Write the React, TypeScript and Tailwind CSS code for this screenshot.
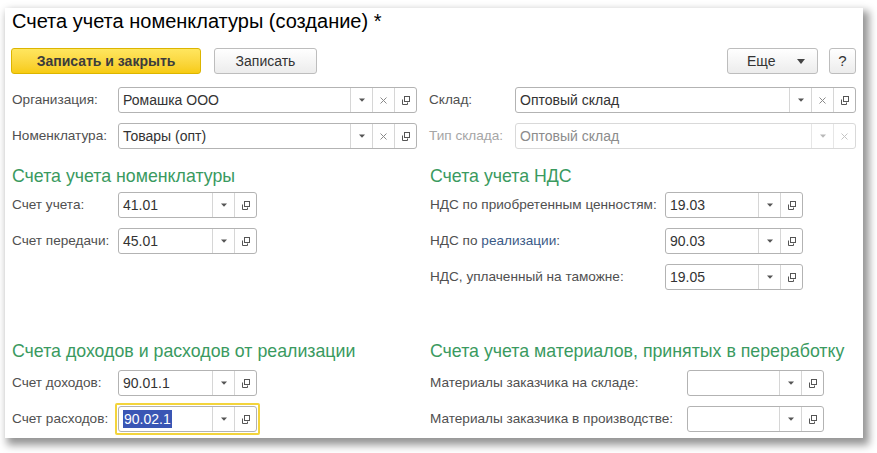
import React from "react";

type Btn = "dd" | "clear" | "open";

function DdIcon({ dim }: { dim?: boolean }) {
  return (
    <svg width="6" height="4" viewBox="0 0 6 4">
      <path d="M0 0.5 H6 L3 3.8 Z" fill={dim ? "#b8b8b8" : "#555"} />
    </svg>
  );
}
function ClearIcon({ dim }: { dim?: boolean }) {
  return (
    <svg width="7" height="7" viewBox="0 0 7 7">
      <path d="M0.5 0.5 L6.5 6.5 M6.5 0.5 L0.5 6.5" stroke={dim ? "#c4c4c4" : "#8a8a8a"} strokeWidth="1" />
    </svg>
  );
}
function OpenIcon() {
  return (
    <svg width="11" height="11" viewBox="0 0 11 11">
      <rect x="4.5" y="1.5" width="5" height="5" fill="none" stroke="#555" strokeWidth="1" />
      <path d="M2.5 4.5 V9.5 H7.5 V7.5" fill="none" stroke="#555" strokeWidth="1" />
    </svg>
  );
}

function Field({
  w,
  value,
  buttons,
  disabled,
  focused,
}: {
  w: string;
  value?: string;
  buttons: Btn[];
  disabled?: boolean;
  focused?: boolean;
}) {
  const border = disabled ? "border-[#d9d9d9]" : "border-[#b3b3b3]";
  const field = (
    <div className={`${w} h-[26px] flex rounded-[3px] border ${border} bg-white`}>
      <div className={`flex-1 flex items-center pl-[4px] text-[14px] ${disabled ? "text-[#8c8c8c]" : "text-[#333]"} overflow-hidden whitespace-nowrap`}>
        {focused ? (
          <span className="bg-[#3a56b4] text-white leading-[18px] px-[1px]">{value}</span>
        ) : (
          value
        )}
      </div>
      {buttons.map((b, i) => (
        <div
          key={i}
          className={`w-[22px] h-full flex items-center justify-center border-l ${disabled ? "border-[#e6e6e6]" : "border-[#d6d6d6]"}`}
        >
          {b === "dd" && <DdIcon dim={disabled} />}
          {b === "clear" && <ClearIcon dim={disabled} />}
          {b === "open" && <OpenIcon />}
        </div>
      ))}
    </div>
  );
  if (focused) {
    return <div className="-m-[3px] border-2 border-[#f3d43c] p-[1px] rounded-[2px]">{field}</div>;
  }
  return field;
}

function Row({
  label,
  lw,
  children,
  disabled,
}: {
  label: React.ReactNode;
  lw: string;
  children: React.ReactNode;
  disabled?: boolean;
}) {
  return (
    <div className="flex items-center h-[26px]">
      <div className={`${lw} shrink-0 text-[13.6px] whitespace-nowrap ${disabled ? "text-[#a6a6a6]" : "text-[#505050]"}`}>
        {label}
      </div>
      {children}
    </div>
  );
}

function Heading({ children }: { children: React.ReactNode }) {
  return <div className="h-[20px] leading-[20px] text-[17.75px] text-[#3a9a5f] whitespace-nowrap">{children}</div>;
}

export default function App() {
  return (
    <div className="w-[877px] h-[453px] bg-white pl-[5px] pt-[8px] font-['Liberation_Sans',Arial,sans-serif]">
      <div className="w-[858px] h-[430px] bg-white shadow-[4px_5px_8px_2px_rgba(0,0,0,0.42)] px-[7px] flex flex-col">
        <div className="mt-[1px] text-[20px] leading-[24px] text-black whitespace-nowrap">
          Счета учета номенклатуры (создание) *
        </div>
        <div className="mt-[15px] flex h-[26px] items-stretch">
          <div className="-ml-[1px] w-[190px] flex items-center justify-center rounded-[3px] border border-[#dcb500] bg-gradient-to-b from-[#ffe65e] to-[#f7cb0e] text-[14px] font-bold text-[#3c3c3c]">
            Записать и закрыть
          </div>
          <div className="ml-[13px] w-[103px] flex items-center justify-center rounded-[3px] border border-[#bdbdbd] bg-gradient-to-b from-white to-[#ececec] text-[14px] text-[#333]">
            Записать
          </div>
          <div className="ml-auto w-[91px] flex items-center rounded-[3px] border border-[#bdbdbd] bg-gradient-to-b from-white to-[#ececec] text-[14px] text-[#333] pl-[19px]">
            <span>Еще</span>
            <span className="ml-[21px]">
              <svg width="8" height="5" viewBox="0 0 8 5">
                <path d="M0 0 H8 L4 5 Z" fill="#444" />
              </svg>
            </span>
          </div>
          <div className="ml-[11px] w-[27px] flex items-center justify-center rounded-[3px] border border-[#bdbdbd] bg-gradient-to-b from-white to-[#ececec] text-[15px] text-[#333]">
            ?
          </div>
        </div>

        {/* Band 1 */}
        <div className="mt-[13px] flex">
          <div className="w-[418px] flex flex-col gap-[10px]">
            <Row label="Организация:" lw="w-[106px]">
              <Field w="w-[299px]" value="Ромашка ООО" buttons={["dd", "clear", "open"]} />
            </Row>
            <Row label="Номенклатура:" lw="w-[106px]">
              <Field w="w-[299px]" value="Товары (опт)" buttons={["dd", "clear", "open"]} />
            </Row>
          </div>
          <div className="flex-1 flex flex-col gap-[10px]">
            <Row label="Склад:" lw="w-[86px]">
              <Field w="w-[341px]" value="Оптовый склад" buttons={["dd", "clear", "open"]} />
            </Row>
            <Row label="Тип склада:" lw="w-[86px]" disabled>
              <Field w="w-[341px]" value="Оптовый склад" buttons={["dd", "clear"]} disabled />
            </Row>
          </div>
        </div>

        {/* Band 2 */}
        <div className="mt-[17px] flex">
          <div className="w-[418px] flex flex-col">
            <Heading>Счета учета номенклатуры</Heading>
            <div className="mt-[6px] flex flex-col gap-[10px]">
              <Row label="Счет учета:" lw="w-[106px]">
                <Field w="w-[139px]" value="41.01" buttons={["dd", "open"]} />
              </Row>
              <Row label="Счет передачи:" lw="w-[106px]">
                <Field w="w-[139px]" value="45.01" buttons={["dd", "open"]} />
              </Row>
            </div>
          </div>
          <div className="flex-1 flex flex-col">
            <Heading>Счета учета НДС</Heading>
            <div className="mt-[6px] flex flex-col gap-[10px]">
              <Row label="НДС по приобретенным ценностям:" lw="w-[235px]">
                <Field w="w-[138px]" value="19.03" buttons={["dd", "open"]} />
              </Row>
              <Row
                label={
                  <>
                    НДС по <span className="text-[#3b5a86]">реализации</span>:
                  </>
                }
                lw="w-[235px]"
              >
                <Field w="w-[138px]" value="90.03" buttons={["dd", "open"]} />
              </Row>
              <Row label="НДС, уплаченный на таможне:" lw="w-[235px]">
                <Field w="w-[138px]" value="19.05" buttons={["dd", "open"]} />
              </Row>
            </div>
          </div>
        </div>

        {/* Band 3 */}
        <div className="mt-[51px] flex">
          <div className="w-[418px] flex flex-col">
            <Heading>Счета доходов и расходов от реализации</Heading>
            <div className="mt-[9px] flex flex-col gap-[10px]">
              <Row label="Счет доходов:" lw="w-[106px]">
                <Field w="w-[139px]" value="90.01.1" buttons={["dd", "open"]} />
              </Row>
              <Row label="Счет расходов:" lw="w-[106px]">
                <Field w="w-[139px]" value="90.02.1" buttons={["dd", "open"]} focused />
              </Row>
            </div>
          </div>
          <div className="flex-1 flex flex-col">
            <Heading>Счета учета материалов, принятых в переработку</Heading>
            <div className="mt-[9px] flex flex-col gap-[10px]">
              <Row label="Материалы заказчика на складе:" lw="w-[257px]">
                <Field w="w-[137px]" buttons={["dd", "open"]} />
              </Row>
              <Row label="Материалы заказчика в производстве:" lw="w-[257px]">
                <Field w="w-[137px]" buttons={["dd", "open"]} />
              </Row>
            </div>
          </div>
        </div>
      </div>
    </div>
  );
}
